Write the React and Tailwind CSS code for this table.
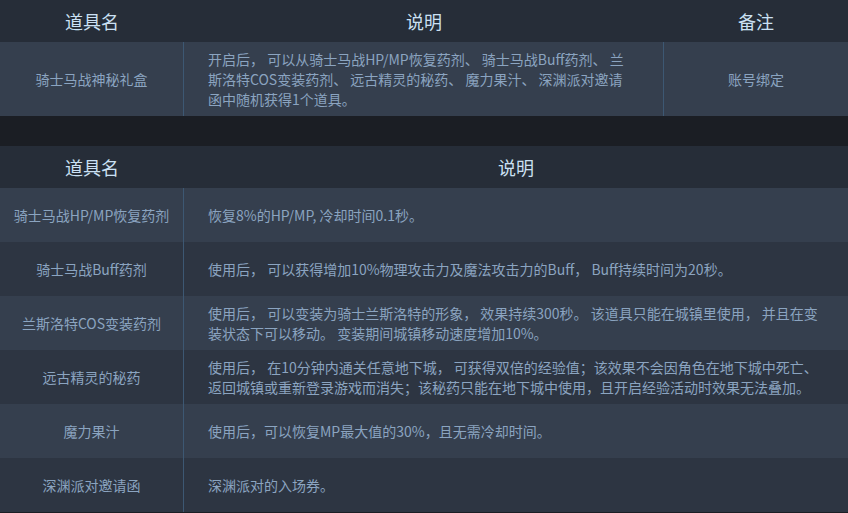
const font = {
  fontFamily: '"Noto Sans CJK SC", "Noto Sans", sans-serif',
};

// second table rows: name + description lines
const items = [
  { name: "骑士马战HP/MP恢复药剂", desc: ["恢复8%的HP/MP, 冷却时间0.1秒。"] },
  {
    name: "骑士马战Buff药剂",
    desc: ["使用后， 可以获得增加10%物理攻击力及魔法攻击力的Buff， Buff持续时间为20秒。"],
  },
  {
    name: "兰斯洛特COS变装药剂",
    desc: [
      "使用后， 可以变装为骑士兰斯洛特的形象， 效果持续300秒。 该道具只能在城镇里使用， 并且在变",
      "装状态下可以移动。 变装期间城镇移动速度增加10%。",
    ],
  },
  {
    name: "远古精灵的秘药",
    desc: [
      "使用后， 在10分钟内通关任意地下城， 可获得双倍的经验值；该效果不会因角色在地下城中死亡、",
      "返回城镇或重新登录游戏而消失；该秘药只能在地下城中使用，且开启经验活动时效果无法叠加。",
    ],
  },
  { name: "魔力果汁", desc: ["使用后，可以恢复MP最大值的30%，且无需冷却时间。"] },
  { name: "深渊派对邀请函", desc: ["深渊派对的入场券。"] },
];

function Desc({ lines }) {
  return (
    <div className="text-[14px] leading-[20px] text-[#8ba4c0]">
      {lines.map((l, i) => (
        <div key={i} className="whitespace-nowrap">
          {l}
        </div>
      ))}
    </div>
  );
}

export default function App() {
  return (
    <div className="w-[848px] h-[513px] bg-[#1b1e24] overflow-hidden" style={font}>
      {/* Top table */}
      <div className="grid grid-cols-[184px_480px_184px]">
        <div className="h-[42px] bg-[#262d38] flex items-center justify-center text-[18px] text-[#cbe0f3]">
          道具名
        </div>
        <div className="h-[42px] bg-[#262d38] flex items-center justify-center text-[18px] text-[#cbe0f3]">
          说明
        </div>
        <div className="h-[42px] bg-[#262d38] flex items-center justify-center text-[18px] text-[#cbe0f3]">
          备注
        </div>

        <div className="h-[74px] bg-[#353f4e] border-r border-[#3d5873] flex items-center justify-center text-[14px] text-[#8ba4c0]">
          骑士马战神秘礼盒
        </div>
        <div className="h-[74px] bg-[#353f4e] border-r border-[#3d5873] flex items-center pl-6">
          <Desc
            lines={[
              "开启后， 可以从骑士马战HP/MP恢复药剂、 骑士马战Buff药剂、 兰",
              "斯洛特COS变装药剂、 远古精灵的秘药、 魔力果汁、 深渊派对邀请",
              "函中随机获得1个道具。",
            ]}
          />
        </div>
        <div className="h-[74px] bg-[#353f4e] flex items-center justify-center text-[14px] text-[#8ba4c0]">
          账号绑定
        </div>
      </div>

      {/* Dark gap */}
      <div className="h-[30px] bg-[#1b1e24]"></div>

      {/* Second table */}
      <div className="grid grid-cols-[184px_664px]">
        <div className="h-[42px] bg-[#262d38] flex items-center justify-center text-[18px] text-[#cbe0f3]">
          道具名
        </div>
        <div className="h-[42px] bg-[#262d38] flex items-center justify-center text-[18px] text-[#cbe0f3]">
          说明
        </div>
        {items.map((it, i) => {
          const bg = i % 2 === 0 ? "bg-[#353f4e]" : "bg-[#2d3542]";
          return [
            <div
              key={"n" + i}
              className={
                bg +
                " h-[54px] border-r border-[#3d5873] flex items-center justify-center text-[14px] text-[#8ba4c0]"
              }
            >
              {it.name}
            </div>,
            <div key={"d" + i} className={bg + " h-[54px] flex items-center pl-6"}>
              <Desc lines={it.desc} />
            </div>,
          ];
        })}
      </div>
    </div>
  );
}
